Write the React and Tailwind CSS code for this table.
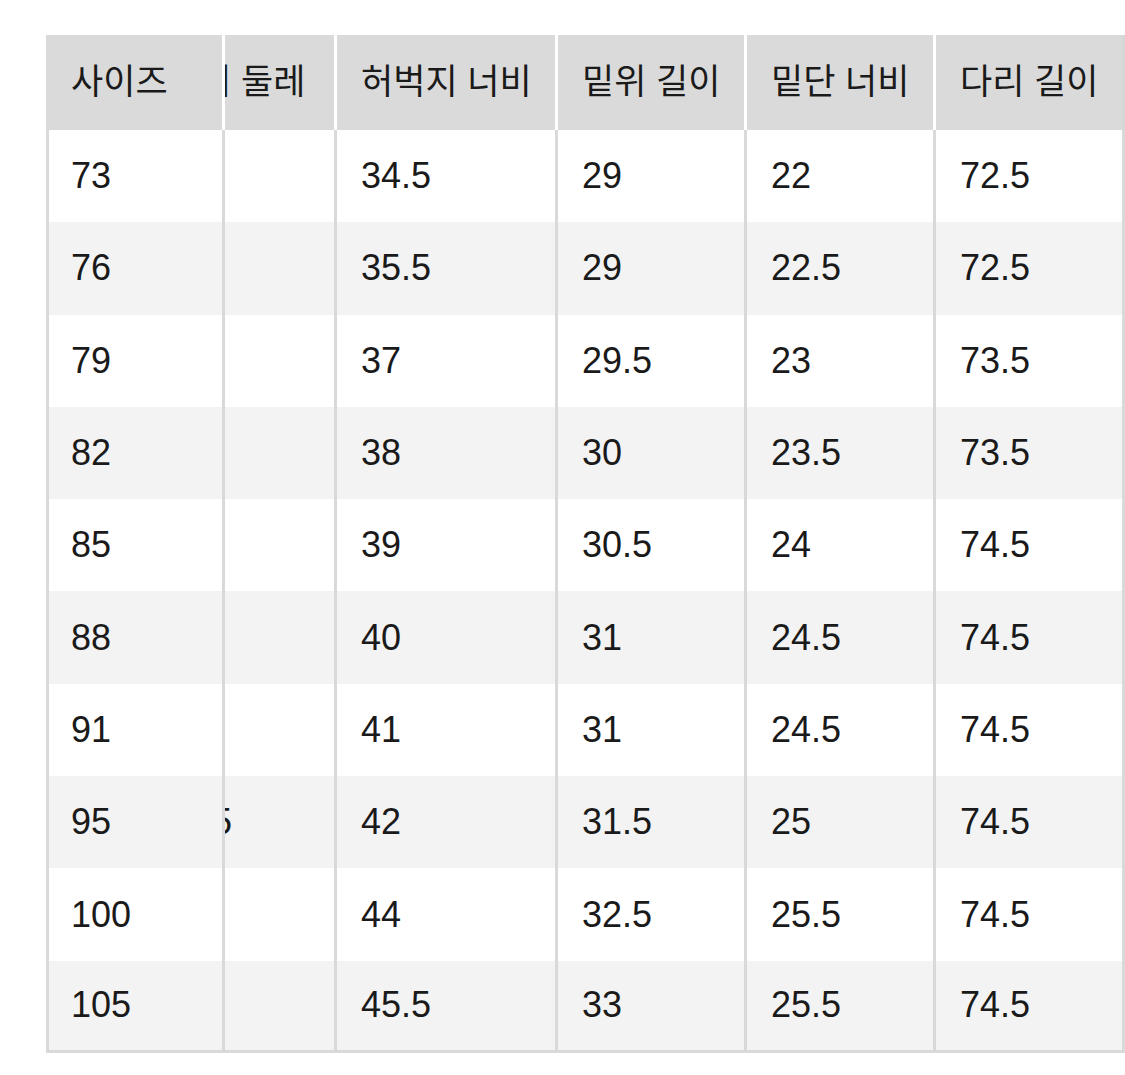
import { useLayoutEffect, useRef } from "react";

const headers = ["사이즈", "허리 둘레", "허벅지 너비", "밑위 길이", "밑단 너비", "다리 길이"];

const rows = [
    ["73", "36", "34.5", "29", "22", "72.5"],
    ["76", "38", "35.5", "29", "22.5", "72.5"],
    ["79", "39", "37", "29.5", "23", "73.5"],
    ["82", "41", "38", "30", "23.5", "73.5"],
    ["85", "42", "39", "30.5", "24", "74.5"],
    ["88", "44", "40", "31", "24.5", "74.5"],
    ["91", "45", "41", "31", "24.5", "74.5"],
    ["95", "47.5", "42", "31.5", "25", "74.5"],
    ["100", "50", "44", "32.5", "25.5", "74.5"],
    ["105", "52", "45.5", "33", "25.5", "74.5"],
];

const widths = ["w-[179px]", "w-[194px]", "w-[221px]", "w-[189px]", "w-[189px]", "w-[189px]"];
const pads = ["pl-[22px]", "pl-[19px]", "pl-6", "pl-6", "pl-6", "pl-6"];

export default function App() {
    const scrollRef = useRef(null);

    // table is scrolled all the way right, first column stays pinned
    useLayoutEffect(() => {
        const el = scrollRef.current;
        if (el) el.scrollLeft = el.scrollWidth;
    }, []);

    return (
        <div className="min-h-screen bg-white pt-[35px] pl-[46px]">
            <div
                ref={scrollRef}
                className="w-[1079px] overflow-x-auto [scrollbar-width:none]"
            >
                <table className="w-[1161px] table-fixed border-separate border-spacing-0 text-[#1a1a1a]">
                    <thead>
                        <tr>
                            {headers.map((h, i) => (
                                <th
                                    key={h}
                                    className={`${widths[i]} h-[95px] bg-[#dadada] ${
                                        i === 0 ? "pl-[22px]" : "pl-6"
                                    } text-left align-middle font-['Liberation_Sans','Noto_Sans_CJK_KR',sans-serif] text-[35px] font-normal whitespace-nowrap overflow-hidden ${
                                        i === 0
                                            ? "sticky left-0 z-10 border-l-[3px] border-r-[3px] border-l-[#dadada] border-r-white"
                                            : i === headers.length - 1
                                            ? "border-r-[3px] border-r-[#d6d6d6]"
                                            : "border-r-[3px] border-r-white"
                                    }`}
                                >
                                    {h}
                                </th>
                            ))}
                        </tr>
                    </thead>
                    <tbody>
                        {rows.map((r, ri) => {
                            const bg = ri % 2 === 0 ? "bg-white" : "bg-[#f3f3f3]";
                            const last = ri === rows.length - 1;
                            return (
                                <tr key={r[0]}>
                                    {r.map((v, ci) => (
                                        <td
                                            key={ci}
                                            className={`${bg} h-[92.3px] ${pads[ci]} align-middle font-['Liberation_Sans',sans-serif] text-[36px] leading-none whitespace-nowrap overflow-hidden border-r-[3px] border-r-[#d9d9d9] ${
                                                last ? "border-b-[3px] border-b-[#d9d9d9]" : ""
                                            } ${ci === 0 ? "sticky left-0 z-10 border-l-[3px] border-l-[#d9d9d9]" : ""}`}
                                        >
                                            {v}
                                        </td>
                                    ))}
                                </tr>
                            );
                        })}
                    </tbody>
                </table>
            </div>
        </div>
    );
}
